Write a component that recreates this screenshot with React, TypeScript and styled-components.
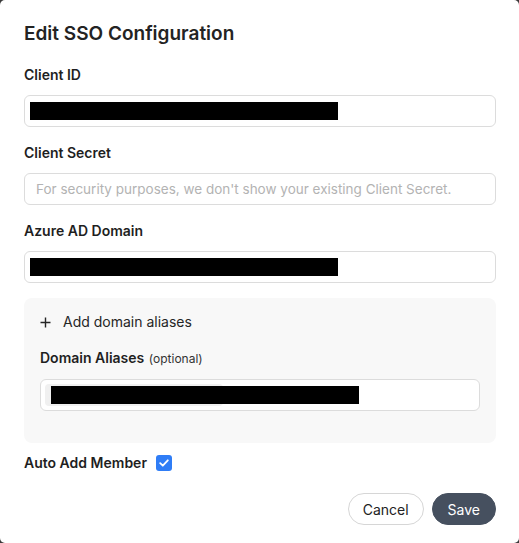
import * as React from 'react';
import styled, { createGlobalStyle } from 'styled-components';

const GlobalStyle = createGlobalStyle`
    html, body {
        margin: 0;
        padding: 0;
        background: #3a3a3a;
    }
    body {
        font-family: Inter, "Liberation Sans", Arial, sans-serif;
        -webkit-font-smoothing: antialiased;
    }
`;

const Modal = styled.div`
    box-sizing: border-box;
    width: 519px;
    height: 543px;
    background: #fff;
    border-radius: 5px;
    padding: 22px 23px 18px 24px;
    display: flex;
    flex-direction: column;
    color: #1f1f1f;
`;

const Title = styled.h2`
    margin: 0;
    font-size: 19px;
    line-height: 24px;
    font-weight: 600;
    color: #232323;
`;

const Field = styled.div<{ $top?: number }>`
    display: flex;
    flex-direction: column;
    margin-top: ${p => p.$top ?? 16}px;
`;

const Label = styled.label`
    font-size: 14px;
    line-height: 20px;
    font-weight: 600;
    margin-bottom: 10px;
`;

const Optional = styled.span`
    font-size: 12px;
    font-weight: 400;
    color: #333;
    margin-left: 1px;
`;

const InputBox = styled.div<{ $pad?: string }>`
    position: relative;
    box-sizing: border-box;
    height: 32px;
    border: 1px solid #dcdcdc;
    border-radius: 6px;
    background: #fff;
    display: flex;
    align-items: center;
    padding: ${p => p.$pad ?? '0 5px'};
`;

const Redacted = styled.div<{ $w: number }>`
    width: ${p => p.$w}px;
    height: 18px;
    background: #000;
`;

const Placeholder = styled.span`
    font-size: 13.5px;
    color: #b3b3b3;
    padding-left: 6px;
    white-space: nowrap;
`;

const Panel = styled.div`
    margin-top: 15px;
    background: #f8f8f8;
    border-radius: 8px;
    padding: 14px 16px 32px 16px;
    display: flex;
    flex-direction: column;
`;

const AddLink = styled.button`
    display: flex;
    align-items: center;
    gap: 12px;
    background: none;
    border: none;
    padding: 0;
    font: inherit;
    font-size: 14px;
    line-height: 20px;
    color: #262626;
    cursor: pointer;
    text-align: left;
    height: 20px;
`;

const Chip = styled.div`
    width: 178px;
    height: 22px;
    border-radius: 4px;
    background: #f0f0f0;
`;

const Overlay = styled.div`
    position: absolute;
    left: 10px;
    top: 6px;
    width: 308px;
    height: 18px;
    background: #000;
`;

const CheckRow = styled.div`
    margin-top: 10px;
    display: flex;
    align-items: center;
    gap: 9px;
    font-size: 14px;
    line-height: 20px;
    font-weight: 600;
`;

const CheckBox = styled.span`
    width: 16px;
    height: 16px;
    border-radius: 3px;
    background: #2f7df6;
    display: inline-flex;
    align-items: center;
    justify-content: center;
`;

const Footer = styled.div`
    margin-top: auto;
    display: flex;
    justify-content: flex-end;
    gap: 8px;
`;

const Button = styled.button<{ $primary?: boolean }>`
    box-sizing: border-box;
    height: 32px;
    padding: 0 ${p => (p.$primary ? 15 : 14)}px;
    border-radius: 16px;
    font: inherit;
    font-size: 14px;
    border: 1px solid ${p => (p.$primary ? '#46505f' : '#d6d6d6')};
    background: ${p => (p.$primary ? '#46505f' : '#fff')};
    color: ${p => (p.$primary ? '#fff' : '#222')};
    cursor: pointer;
`;

const App: React.FunctionComponent = () => {
    return (
        <React.Fragment>
            <GlobalStyle />
            <Modal>
                <Title>Edit SSO Configuration</Title>
                <Field $top={19}>
                    <Label>Client ID</Label>
                    <InputBox>
                        <Redacted $w={308} />
                    </InputBox>
                </Field>
                <Field>
                    <Label>Client Secret</Label>
                    <InputBox>
                        <Placeholder>For security purposes, we don't show your existing Client Secret.</Placeholder>
                    </InputBox>
                </Field>
                <Field>
                    <Label>Azure AD Domain</Label>
                    <InputBox>
                        <Redacted $w={308} />
                    </InputBox>
                </Field>
                <Panel>
                    <AddLink>
                        <svg width="11" height="11" viewBox="0 0 11 11">
                            <path d="M5.5 0.5v10M0.5 5.5h10" stroke="#262626" strokeWidth="1.4" />
                        </svg>
                        Add domain aliases
                    </AddLink>
                    <Field>
                        <Label>Domain Aliases <Optional>(optional)</Optional></Label>
                        <InputBox $pad="0 4px">
                            <Chip />
                            <Overlay />
                        </InputBox>
                    </Field>
                </Panel>
                <CheckRow>
                    Auto Add Member
                    <CheckBox>
                        <svg width="10" height="8" viewBox="0 0 10 8">
                            <path d="M1.2 4.2l2.6 2.5L8.8 1.3" stroke="#fff" strokeWidth="1.8" fill="none" strokeLinecap="round" strokeLinejoin="round" />
                        </svg>
                    </CheckBox>
                </CheckRow>
                <Footer>
                    <Button>Cancel</Button>
                    <Button $primary>Save</Button>
                </Footer>
            </Modal>
        </React.Fragment>
    );
};

export default App;
